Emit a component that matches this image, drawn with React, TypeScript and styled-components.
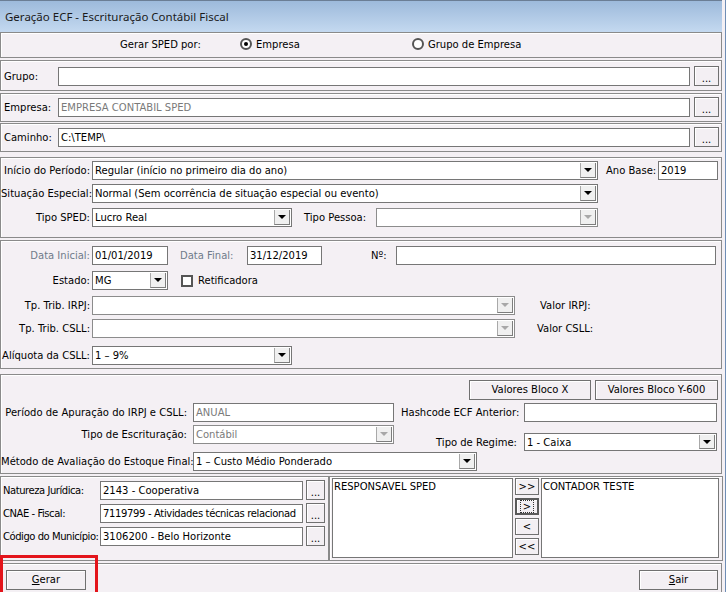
import React from "react"
import styled, { createGlobalStyle } from "styled-components"

const GlobalStyle = createGlobalStyle`
    html, body {
        margin: 0;
        padding: 0;
        background: #f4f0f4;
    }
    * {
        box-sizing: border-box;
    }
`;

const Window = styled.div`
    position: relative;
    width: 726px;
    height: 592px;
    overflow: hidden;
    background: #f4f0f4;
    border-right: 1px solid #6f8db5;
    padding-right: 3px;
    font-family: "DejaVu Sans", "Liberation Sans", sans-serif;
    font-size: 10px;
    color: #000;
`;

const TitleBar = styled.div`
    height: 32px;
    display: flex;
    align-items: center;
    padding-left: 5px;
    padding-bottom: 1px;
    background: linear-gradient(#9dbadb, #c4d9f0);
    border-top: 1px solid #6b7e95;
    font-family: "Noto Sans", "DejaVu Sans", sans-serif;
    font-size: 11.5px;
    color: #1a1a1a;
`;

const Panel = styled.div<{ $h: number; $mt?: number; $pt?: number; $w?: number }>`
    display: flex;
    flex-direction: column;
    height: ${(p) => p.$h}px;
    margin-top: ${(p) => p.$mt ?? 0}px;
    padding-top: ${(p) => p.$pt ?? 0}px;
    ${(p) => (p.$w ? `width: ${p.$w}px; flex: none;` : "flex: 1;")}
    border: 1px solid #8a8a8a;
    box-shadow: inset 1px 1px 0 #ffffff;
    background: #f4f0f4;
`;

const Row = styled.div<{ $mt?: number; $align?: string }>`
    display: flex;
    align-items: ${(p) => p.$align ?? "center"};
    margin-top: ${(p) => p.$mt ?? 0}px;
`;

const Label = styled.span<{ $w?: number; $ml?: number; $right?: boolean; $muted?: boolean; $tight?: boolean }>`
    flex: none;
    ${(p) => (p.$w ? `width: ${p.$w}px;` : "")}
    margin-left: ${(p) => p.$ml ?? 0}px;
    text-align: ${(p) => (p.$right ? "right" : "left")};
    white-space: nowrap;
    letter-spacing: ${(p) => (p.$tight ? "-0.45px" : "0")};
    color: ${(p) => (p.$muted ? "#6f7b8a" : "#000")};
`;

const Field = styled.div<{ $w?: number; $ml?: number; $h?: number; $gray?: boolean; $tight?: boolean }>`
    flex: ${(p) => (p.$w ? "none" : "1")};
    ${(p) => (p.$w ? `width: ${p.$w}px;` : "")}
    height: ${(p) => p.$h ?? 19}px;
    margin-left: ${(p) => p.$ml ?? 0}px;
    display: flex;
    align-items: center;
    padding-left: 2px;
    background: #fff;
    border: 1px solid #767676;
    white-space: nowrap;
    overflow: hidden;
    letter-spacing: ${(p) => (p.$tight ? "-0.35px" : "0")};
    color: ${(p) => (p.$gray ? "#7a7a7a" : "#000")};
`;

const SelectBox = styled(Field)<{ $disabled?: boolean }>`
    padding-right: 1px;
    border-color: ${(p) => (p.$disabled ? "#8c8c8c" : "#767676")};
`;

const SelectText = styled.span`
    flex: 1;
    overflow: hidden;
`;

const ArrowBox = styled.span`
    flex: none;
    width: 16px;
    height: calc(100% - 2px);
    display: flex;
    align-items: center;
    justify-content: center;
    background: #f0f0f0;
    border-left: 1px solid #a9a9a9;
    border-right: 1px solid #7d7d7d;
    border-bottom: 1px solid #7d7d7d;
`;

const Triangle = styled.span<{ $disabled?: boolean }>`
    width: 0;
    height: 0;
    border-left: 4px solid transparent;
    border-right: 4px solid transparent;
    border-top: 4px solid ${(p) => (p.$disabled ? "#a8a8a8" : "#000")};
`;

const SmallButton = styled.button<{ $w: number; $h?: number; $ml?: number; $focused?: boolean }>`
    flex: none;
    width: ${(p) => p.$w}px;
    height: ${(p) => p.$h ?? 20}px;
    margin-left: ${(p) => p.$ml ?? 0}px;
    padding: 0;
    display: flex;
    align-items: center;
    justify-content: center;
    background: #f3eff3;
    border: ${(p) => (p.$focused ? "2px solid #5a5a5a" : "1px solid #707070")};
    box-shadow: inset 1px 1px 0 #ffffff;
    font: inherit;
    color: #000;
    line-height: 1;
`;

const Dots = styled.span`
    margin-top: 6px;
    letter-spacing: 0;
`;

const FocusRect = styled.span`
    padding: 0 2px;
    outline: 1px dotted #333;
    line-height: 11px;
`;

const RadioCircle = styled.span<{ $checked?: boolean }>`
    flex: none;
    width: 12px;
    height: 12px;
    border-radius: 50%;
    border: 2px solid #555;
    background: #fff;
    display: flex;
    align-items: center;
    justify-content: center;
    &::after {
        content: "";
        width: 4px;
        height: 4px;
        border-radius: 50%;
        background: ${(p) => (p.$checked ? "#000" : "transparent")};
    }
`;

const CheckSquare = styled.span<{ $ml?: number }>`
    flex: none;
    width: 12px;
    height: 12px;
    margin-left: ${(p) => p.$ml ?? 0}px;
    border: 2px solid #555;
    background: #fff;
`;

const RadioGroup = styled.label<{ $w?: number }>`
    display: flex;
    align-items: center;
    gap: 4px;
    ${(p) => (p.$w ? `width: ${p.$w}px;` : "")}
`;

const Spacer = styled.div<{ $w?: number }>`
    flex: ${(p) => (p.$w ? "none" : "1")};
    ${(p) => (p.$w ? `width: ${p.$w}px;` : "")}
`;

const ButtonRow = styled.div`
    display: flex;
    justify-content: flex-end;
    gap: 4px;
    padding-right: 3px;
`;

const Bottom = styled.div`
    display: flex;
    margin-top: 2px;
`;

const ListArea = styled.div`
    display: flex;
    padding: 1px 3px 0 2px;
`;

const ListBox = styled.div<{ $w: number; $ml?: number }>`
    width: ${(p) => p.$w}px;
    height: 80px;
    margin-left: ${(p) => p.$ml ?? 0}px;
    background: #fff;
    border: 1px solid #767676;
    padding: 2px 1px;
`;

const MoveColumn = styled.div`
    display: flex;
    flex-direction: column;
    gap: 3px;
    margin-left: 2px;
`;

const FooterRow = styled.div`
    display: flex;
    align-items: center;
    padding: 0 3px 0 5px;
`;

const Underline = styled.span`
    text-decoration: underline;
`;

const Highlight = styled.div`
    position: absolute;
    left: 0;
    top: 555px;
    width: 98px;
    height: 44px;
    border: 3px solid #e3141b;
    pointer-events: none;
`;

type SelectProps = {
    w?: number
    ml?: number
    h?: number
    value?: string
    disabled?: boolean
}

const Select = ({ w, ml, h, value, disabled }: SelectProps) => (
    <SelectBox $w={w} $ml={ml} $h={h} $disabled={disabled} $gray={disabled}>
        <SelectText>{value}</SelectText>
        <ArrowBox>
            <Triangle $disabled={disabled} />
        </ArrowBox>
    </SelectBox>
)

const DotsButton = ({ w = 25, ml = 4, h = 20 }: { w?: number; ml?: number; h?: number }) => (
    <SmallButton $w={w} $ml={ml} $h={h}>
        <Dots>...</Dots>
    </SmallButton>
)

export default function App() {
    return (
        <>
            <GlobalStyle />
            <Window>
                <TitleBar>Geração ECF - Escrituração Contábil Fiscal</TitleBar>

                <Panel $h={26}>
                    <Row $mt={5}>
                        <Label $w={120} $ml={119}>Gerar SPED por:</Label>
                        <RadioGroup $w={172}>
                            <RadioCircle $checked />
                            Empresa
                        </RadioGroup>
                        <RadioGroup>
                            <RadioCircle />
                            Grupo de Empresa
                        </RadioGroup>
                    </Row>
                </Panel>

                <Panel $h={31} $mt={2} $pt={5}>
                    <Row>
                        <Label $w={54} $ml={3}>Grupo:</Label>
                        <Field $h={19} />
                        <DotsButton />
                        <Spacer $w={2} />
                    </Row>
                </Panel>

                <Panel $h={29} $mt={2} $pt={3}>
                    <Row>
                        <Label $w={54} $ml={3}>Empresa:</Label>
                        <Field $gray>EMPRESA CONTABIL SPED</Field>
                        <DotsButton />
                        <Spacer $w={2} />
                    </Row>
                </Panel>

                <Panel $h={29} $mt={1} $pt={3}>
                    <Row>
                        <Label $w={54} $ml={3}>Caminho:</Label>
                        <Field>C:\TEMP\</Field>
                        <DotsButton />
                        <Spacer $w={2} />
                    </Row>
                </Panel>

                <Panel $h={81} $mt={5} $pt={3}>
                    <Row>
                        <Label $w={89} $right>Início do Período:</Label>
                        <Select w={506} ml={2} value="Regular (início no primeiro dia do ano)" />
                        <Label $w={50} $ml={8}>Ano Base:</Label>
                        <Field $w={60} $ml={2}>2019</Field>
                    </Row>
                    <Row $mt={4}>
                        <Label $w={89} $right>Situação Especial:</Label>
                        <Select w={506} ml={2} value="Normal (Sem ocorrência de situação especial ou evento)" />
                    </Row>
                    <Row $mt={5}>
                        <Label $w={89} $right>Tipo SPED:</Label>
                        <Select w={200} ml={2} value="Lucro Real" />
                        <Label $w={68} $ml={12}>Tipo Pessoa:</Label>
                        <Select w={222} ml={4} disabled />
                    </Row>
                </Panel>

                <Panel $h={129} $mt={2} $pt={5}>
                    <Row>
                        <Label $w={89} $right $muted>Data Inicial:</Label>
                        <Field $w={76} $ml={2}>01/01/2019</Field>
                        <Label $w={55} $ml={12} $muted>Data Final:</Label>
                        <Field $w={75} $ml={12}>31/12/2019</Field>
                        <Label $w={22} $ml={49}>Nº:</Label>
                        <Field $w={320} $ml={3}>{""}</Field>
                    </Row>
                    <Row $mt={6}>
                        <Label $w={89} $right>Estado:</Label>
                        <Select w={76} ml={2} value="MG" />
                        <CheckSquare $ml={13} />
                        <Label $ml={5}>Retificadora</Label>
                    </Row>
                    <Row $mt={6}>
                        <Label $w={89} $right>Tp. Trib. IRPJ:</Label>
                        <Select w={423} ml={2} disabled />
                        <Label $ml={25}>Valor IRPJ:</Label>
                    </Row>
                    <Row $mt={4}>
                        <Label $w={89} $right>Tp. Trib. CSLL:</Label>
                        <Select w={423} ml={2} disabled />
                        <Label $ml={22}>Valor CSLL:</Label>
                    </Row>
                    <Row $mt={8}>
                        <Label $w={89} $right>Alíquota da CSLL:</Label>
                        <Select w={200} ml={2} value="1 – 9%" />
                    </Row>
                </Panel>

                <Panel $h={100} $mt={5} $pt={5}>
                    <ButtonRow>
                        <SmallButton $w={122}>Valores Bloco X</SmallButton>
                        <SmallButton $w={123}>Valores Bloco Y-600</SmallButton>
                    </ButtonRow>
                    <Row $mt={3}>
                        <Label $w={186} $right>Período de Apuração do IRPJ e CSLL:</Label>
                        <Field $w={201} $ml={6} $gray>ANUAL</Field>
                        <Label $w={116} $ml={7} $right>Hashcode ECF Anterior:</Label>
                        <Field $w={193} $ml={7}>{""}</Field>
                    </Row>
                    <Row $mt={3} $align="flex-start">
                        <Label $w={186} $right style={{ lineHeight: "19px" }}>Tipo de Escrituração:</Label>
                        <Select w={201} ml={6} value="Contábil" disabled />
                        <Row $mt={8}>
                            <Label $w={116} $ml={7} $right>Tipo de Regime:</Label>
                            <Select w={193} ml={7} h={18} value="1  - Caixa" />
                        </Row>
                    </Row>
                    <Row $mt={1}>
                        <Label $w={186} $right>Método de Avaliação do Estoque Final:</Label>
                        <Select w={284} ml={6} value="1 – Custo Médio Ponderado" />
                    </Row>
                </Panel>

                <Bottom>
                    <Panel $w={329} $h={85} $pt={3}>
                        <Row>
                            <Label $w={97} $ml={2} $tight>Natureza Jurídica:</Label>
                            <Field $w={203}>2143 - Cooperativa</Field>
                            <DotsButton w={19} ml={3} />
                        </Row>
                        <Row $mt={3}>
                            <Label $w={97} $ml={2} $tight>CNAE - Fiscal:</Label>
                            <Field $w={203} $tight>7119799 - Atividades técnicas relacionad</Field>
                            <DotsButton w={19} ml={3} />
                        </Row>
                        <Row $mt={3}>
                            <Label $w={97} $ml={2} $tight>Código do Município:</Label>
                            <Field $w={203}>3106200 - Belo Horizonte</Field>
                            <DotsButton w={19} ml={3} />
                        </Row>
                    </Panel>
                    <Panel $h={85}>
                        <ListArea>
                            <ListBox $w={181}>RESPONSAVEL SPED</ListBox>
                            <MoveColumn>
                                <SmallButton $w={24} $h={17}>&gt;&gt;</SmallButton>
                                <SmallButton $w={24} $h={17} $focused>
                                    <FocusRect>&gt;</FocusRect>
                                </SmallButton>
                                <SmallButton $w={24} $h={17}>&lt;</SmallButton>
                                <SmallButton $w={24} $h={17}>&lt;&lt;</SmallButton>
                            </MoveColumn>
                            <ListBox $w={178} $ml={2}>CONTADOR TESTE</ListBox>
                        </ListArea>
                    </Panel>
                </Bottom>

                <Panel $h={32} $mt={2} $pt={6}>
                    <FooterRow>
                        <SmallButton $w={80}>
                            <Underline>G</Underline>erar
                        </SmallButton>
                        <Spacer />
                        <SmallButton $w={79}>
                            <Underline>S</Underline>air
                        </SmallButton>
                    </FooterRow>
                </Panel>

                <Highlight />
            </Window>
        </>
    )
}
